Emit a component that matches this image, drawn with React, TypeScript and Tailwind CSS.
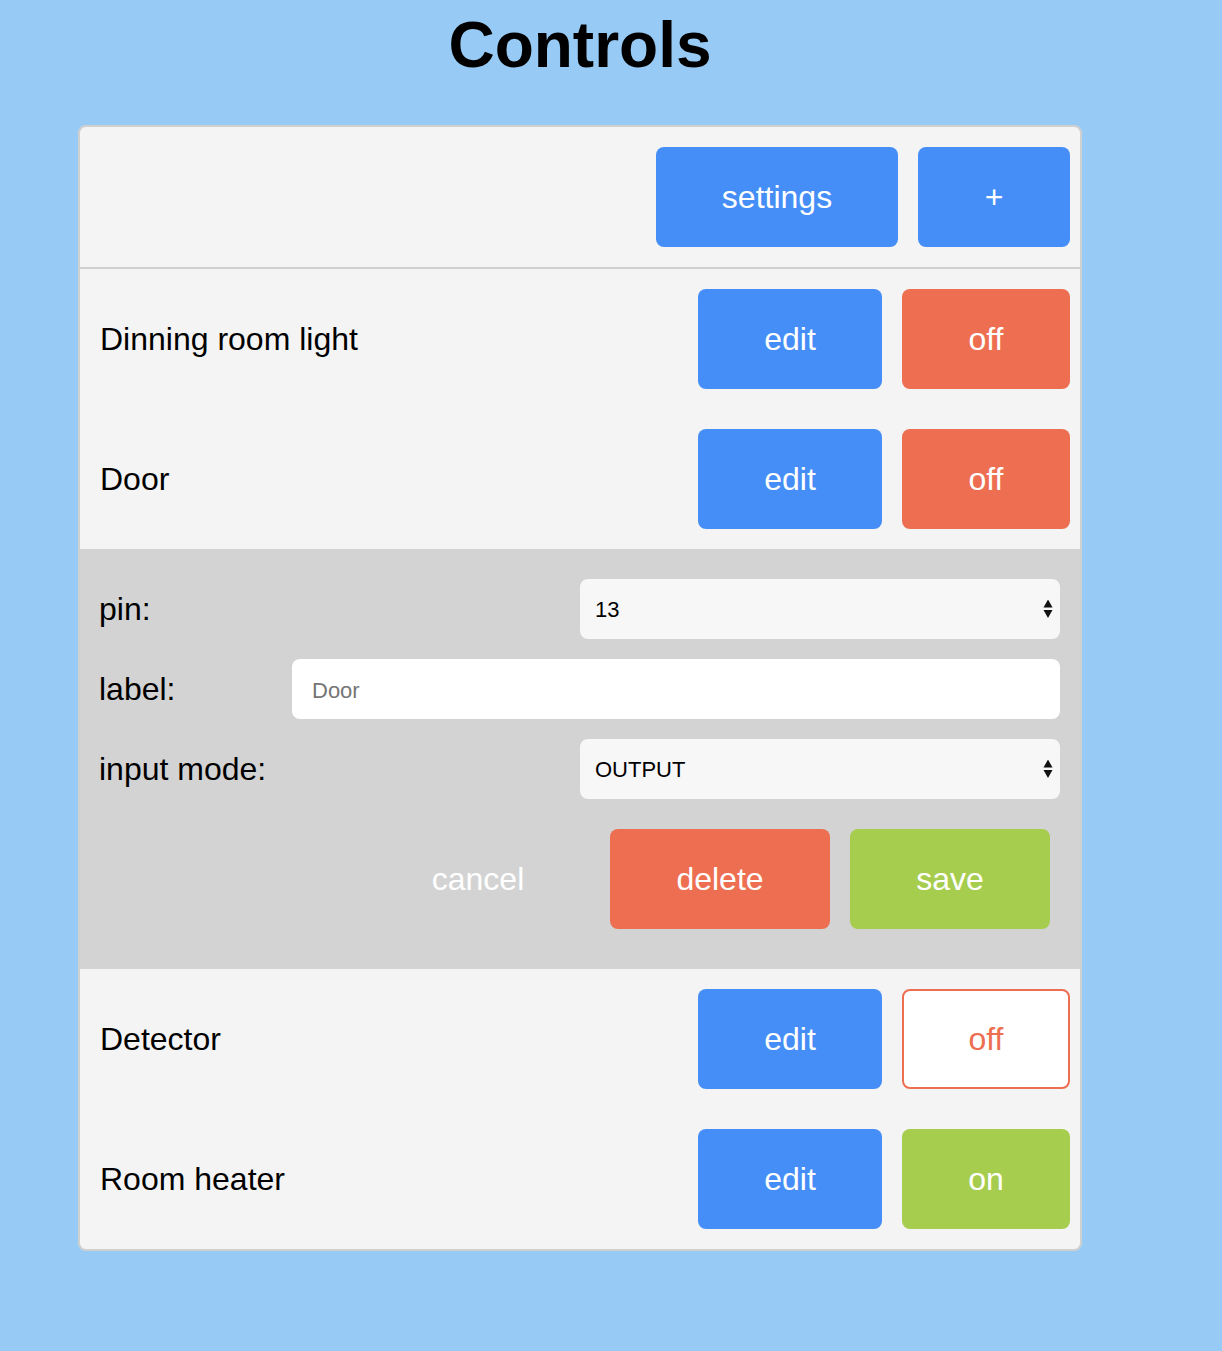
import { useState } from "react";

type Device = {
    id: number;
    label: string;
    state: "off" | "off-outline" | "on";
};

const devices: Device[] = [
    { id: 1, label: "Dinning room light", state: "off" },
    { id: 2, label: "Door", state: "off" },
    { id: 3, label: "Detector", state: "off-outline" },
    { id: 4, label: "Room heater", state: "on" },
];

function SelectArrows() {
    return (
        <svg
            width="10"
            height="19"
            viewBox="0 0 10 19"
            className="pointer-events-none absolute right-[7px] top-1/2 -translate-y-1/2"
        >
            <path d="M5 0 L9.5 8 L0.5 8 Z" fill="#111" />
            <path d="M0.5 10.5 L9.5 10.5 L5 18.5 Z" fill="#111" />
        </svg>
    );
}

function DeviceRow({ device, onEdit }: { device: Device; onEdit: () => void }) {
    return (
        <div className="flex items-center justify-between py-[20px] pl-[20px] pr-[10px]">
            <span className="text-[32px] text-black">{device.label}</span>
            <div className="flex gap-[20px]">
                <button
                    onClick={onEdit}
                    className="h-[100px] w-[184px] rounded-[8px] bg-[#458ef7] text-[32px] text-white"
                >
                    edit
                </button>
                {device.state === "on" && (
                    <button className="h-[100px] w-[168px] rounded-[8px] bg-[#a7cd4f] text-[32px] text-white">
                        on
                    </button>
                )}
                {device.state === "off" && (
                    <button className="h-[100px] w-[168px] rounded-[8px] bg-[#ed6e50] text-[32px] text-white">
                        off
                    </button>
                )}
                {device.state === "off-outline" && (
                    <button className="h-[100px] w-[168px] rounded-[8px] border-2 border-[#ed6e50] bg-white text-[32px] text-[#ed6e50]">
                        off
                    </button>
                )}
            </div>
        </div>
    );
}

function EditForm() {
    return (
        <div className="bg-[#d3d3d3] pt-[30px] pb-[40px] pl-[19px] pr-[20px]">
            {/* pin */}
            <div className="flex items-center justify-between">
                <label className="text-[32px] text-black">pin:</label>
                <div className="relative w-[480px]">
                    <select
                        defaultValue="13"
                        className="h-[60px] w-full appearance-none rounded-[8px] bg-[#f7f7f7] pl-[15px] text-[22px] text-black outline-none"
                    >
                        <option value="13">13</option>
                    </select>
                    <SelectArrows />
                </div>
            </div>

            {/* label */}
            <div className="mt-[20px] flex items-center justify-between">
                <label className="text-[32px] text-black">label:</label>
                <input
                    type="text"
                    placeholder="Door"
                    className="h-[60px] w-[768px] rounded-[8px] bg-white pl-[20px] pt-[4px] text-[22px] text-black outline-none placeholder:text-[#757575]"
                />
            </div>

            {/* input mode */}
            <div className="mt-[20px] flex items-center justify-between">
                <label className="text-[32px] text-black">input mode:</label>
                <div className="relative w-[480px]">
                    <select
                        defaultValue="OUTPUT"
                        className="h-[60px] w-full appearance-none rounded-[8px] bg-[#f7f7f7] pl-[15px] text-[22px] text-black outline-none"
                    >
                        <option value="OUTPUT">OUTPUT</option>
                    </select>
                    <SelectArrows />
                </div>
            </div>

            <div className="mt-[30px] flex justify-end gap-[20px] pr-[10px]">
                <button className="mr-[12px] h-[100px] w-[200px] text-[32px] text-white">cancel</button>
                <button className="h-[100px] w-[220px] rounded-[8px] bg-[#ed6e50] text-[32px] text-white">
                    delete
                </button>
                <button className="h-[100px] w-[200px] rounded-[8px] bg-[#a7cd4f] text-[32px] text-white">
                    save
                </button>
            </div>
        </div>
    );
}

export default function App() {
    const [editing, setEditing] = useState<number | null>(2);

    return (
        <div
            className="min-h-[1351px] bg-[#97cbf5]"
            style={{ fontFamily: '"Liberation Sans", Arial, sans-serif' }}
        >
            <div className="ml-[78px] w-[1004px] pt-[13px]">
                <h1 className="text-center text-[64px] font-bold leading-[64px] text-black">Controls</h1>

                <div className="mt-[48px] overflow-hidden rounded-[8px] border-2 border-[#d0d0d0] bg-[#f4f4f4]">
                    {/* toolbar */}
                    <div className="flex justify-end gap-[20px] border-b-2 border-[#d0d0d0] px-[10px] py-[20px]">
                        <button className="h-[100px] w-[242px] rounded-[8px] bg-[#458ef7] text-[32px] text-white">
                            settings
                        </button>
                        <button className="h-[100px] w-[152px] rounded-[8px] bg-[#458ef7] text-[32px] text-white">
                            +
                        </button>
                    </div>

                    {devices.map((d) => (
                        <div key={d.id}>
                            <DeviceRow
                                device={d}
                                onEdit={() => setEditing(editing === d.id ? null : d.id)}
                            />
                            {editing === d.id && <EditForm />}
                        </div>
                    ))}
                </div>
            </div>
        </div>
    );
}
